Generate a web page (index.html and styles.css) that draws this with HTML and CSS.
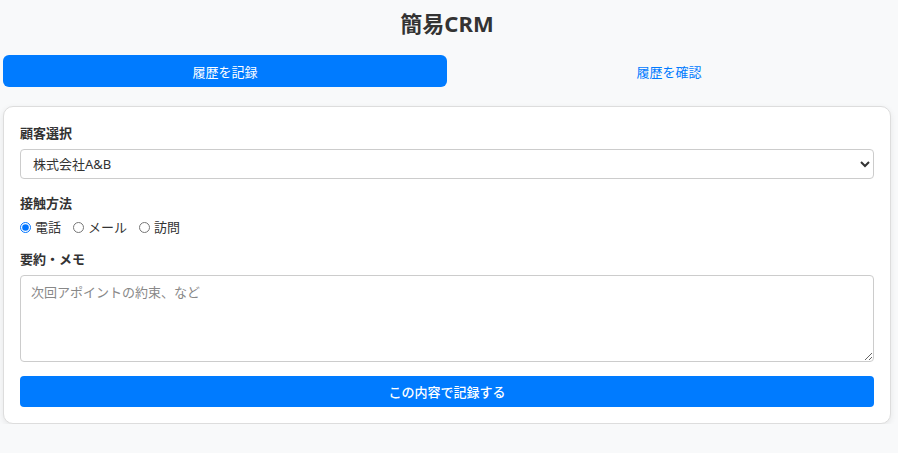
FILE: index.html
```html
<!DOCTYPE html>
<html lang="ja">
<head>
    <meta charset="UTF-8">
    <meta name="viewport" content="width=device-width, initial-scale=1.0">
    <title>簡易CRM</title>
    <link rel="stylesheet" href="styles.css">
</head>
<body>

<div class="app">
    <h1 class="title">簡易CRM</h1>

    <div class="tabs">
        <button class="tab active">履歴を記録</button>
        <button class="tab">履歴を確認</button>
    </div>

    <form class="card">
        <div class="group">
            <label class="label" for="customer">顧客選択</label>
            <select id="customer" class="field">
                <option>株式会社A&amp;B</option>
                <option>株式会社C&amp;D</option>
            </select>
        </div>

        <div class="group">
            <span class="label">接触方法</span>
            <div class="radios">
                <label class="radio"><input type="radio" name="method" checked> 電話</label>
                <label class="radio"><input type="radio" name="method"> メール</label>
                <label class="radio"><input type="radio" name="method"> 訪問</label>
            </div>
        </div>

        <div class="group">
            <label class="label" for="memo">要約・メモ</label>
            <textarea id="memo" class="field memo" placeholder="次回アポイントの約束、など"></textarea>
        </div>

        <button type="button" class="btn-submit">この内容で記録する</button>
    </form>
</div>

</body>
</html>
```

FILE: styles.css
```css
* {
    box-sizing: border-box;
    margin: 0;
    padding: 0;
    font-family: "Noto Sans", "Noto Sans CJK JP", sans-serif;
}

body {
    background: #f8f9fa;
    color: #333;
}

.app {
    width: 888px;
    margin-left: 3px;
}

.title {
    font-size: 22px;
    line-height: 30px;
    font-weight: 700;
    text-align: center;
    color: #333;
    margin: 8px 0 17px;
}

.tabs {
    display: flex;
    margin-bottom: 19px;
}

.tab {
    flex: 1;
    height: 32px;
    border: none;
    border-radius: 6px;
    background: transparent;
    color: #007bff;
    font-size: 13px;
    cursor: pointer;
}

.tab.active {
    background: #007bff;
    color: #fff;
}

.card {
    background: #fff;
    border: 1px solid #ddd;
    border-radius: 10px;
    box-shadow: 0 2px 6px rgba(0, 0, 0, 0.08);
    padding: 16px;
}

.group {
    display: flex;
    flex-direction: column;
    margin-bottom: 14px;
}

.label {
    font-size: 13px;
    line-height: 20px;
    font-weight: 700;
    margin-bottom: 6px;
}

.field {
    width: 100%;
    border: 1px solid #ccc;
    border-radius: 4px;
    font-size: 13px;
    color: #333;
    background: #fff;
}

select.field {
    height: 30px;
    padding: 0 8px;
}

.memo {
    height: 87px;
    padding: 6px 10px;
    line-height: 20px;
    resize: vertical;
}

.memo::placeholder {
    color: #888;
}

.radios {
    display: flex;
    gap: 12px;
    font-size: 13px;
    line-height: 16px;
}

.radio {
    display: flex;
    align-items: center;
}

.radio input {
    width: 11px;
    height: 11px;
    margin: 0 4px 0 0;
}

.btn-submit {
    width: 100%;
    height: 31px;
    border: none;
    border-radius: 4px;
    background: #007bff;
    color: #fff;
    font-size: 13px;
    font-weight: 500;
    cursor: pointer;
}
```
